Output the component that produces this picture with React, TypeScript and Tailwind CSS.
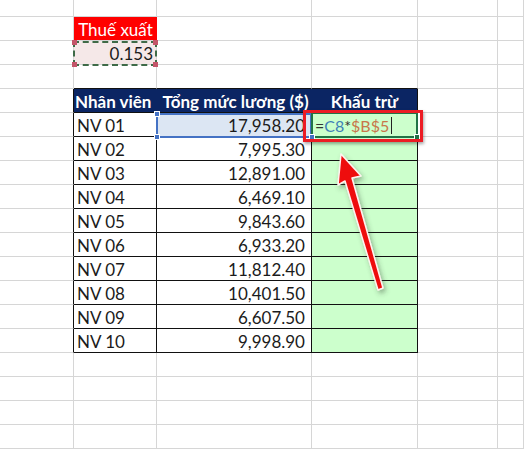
import React from "react";

const data: [string, string][] = [
  ["NV 01", "17,958.20"],
  ["NV 02", "7,995.30"],
  ["NV 03", "12,891.00"],
  ["NV 04", "6,469.10"],
  ["NV 05", "9,843.60"],
  ["NV 06", "6,933.20"],
  ["NV 07", "11,812.40"],
  ["NV 08", "10,401.50"],
  ["NV 09", "6,607.50"],
  ["NV 10", "9,998.90"],
];

const ROWS = 20;
const COLS = 6;

function rightCls(r: number, c: number) {
  if (r === 4 && (c === 1 || c === 2)) return "border-r-[#0b2563]";
  if (r >= 4 && r <= 14 && c >= 0 && c <= 3) return "border-r-[#111]";
  if (r === 1 && c === 1) return "border-r-[#ff0000]";
  return "border-r-[#d6d6d6]";
}

function bottomCls(r: number, c: number) {
  if (c >= 1 && c <= 3 && r >= 3 && r <= 14) return "border-b-[#111]";
  return "border-b-[#d6d6d6]";
}

function bgCls(r: number, c: number) {
  if (r === 1 && c === 1) return "bg-[#ff0000]";
  if (r === 2 && c === 1) return "bg-[#f5e8e8]";
  if (r === 4 && c >= 1 && c <= 3) return "bg-[#0b2563]";
  if (r === 5 && c === 2) return "bg-[#dce6f3]";
  if (r >= 5 && r <= 14 && c === 3) return "bg-[#ccffcc]";
  return "bg-white";
}

function content(r: number, c: number): React.ReactNode {
  if (r === 1 && c === 1)
    return <div className="w-full pl-[1px] text-center text-white">Thuế xuất</div>;
  if (r === 2 && c === 1)
    return <div className="w-full pr-[3px] text-right">0.153</div>;
  if (r === 4 && c === 1)
    return (
      <div className="relative z-10 whitespace-nowrap pl-[1px] font-bold text-white">
        Nhân viên
      </div>
    );
  if (r === 4 && c === 2)
    return (
      <div className="w-full whitespace-nowrap pl-[3px] text-center font-bold text-white">
        Tổng mức lương ($)
      </div>
    );
  if (r === 4 && c === 3)
    return <div className="w-full text-center font-bold text-white">Khấu trừ</div>;
  if (r >= 5 && r <= 14) {
    const d = data[r - 5];
    if (c === 1) return <div className="pl-[3px]">{d[0]}</div>;
    if (c === 2) return <div className="w-full pr-[6px] text-right">{d[1]}</div>;
    if (c === 3 && r === 5)
      return (
        <div className="relative z-10 flex items-end whitespace-nowrap pl-[3px] text-[16px]">
          <span className="text-[#333]">=</span>
          <span className="text-[#3f7fb8]">C8</span>
          <span className="text-[#333]">*</span>
          <span className="text-[#c8774a]">$B$5</span>
          <span className="mb-[2px] ml-[2px] inline-block h-[17px] w-px bg-[#222]" />
        </div>
      );
  }
  return null;
}

export default function App() {
  const cells: React.ReactNode[] = [];
  for (let r = 0; r < ROWS; r++) {
    for (let c = 0; c < COLS; c++) {
      cells.push(
        <div
          key={`${r}-${c}`}
          className={`flex items-end overflow-visible border-r border-b ${rightCls(r, c)} ${bottomCls(
            r,
            c
          )} ${bgCls(r, c)}`}
        >
          {content(r, c)}
        </div>
      );
    }
  }

  return (
    <div className="relative h-[449px] w-[524px] overflow-hidden bg-white font-['Lato','Open_Sans',sans-serif] text-[17px] leading-[20px] text-[#1b1b1b]">
      <div className="-mt-[7px] grid auto-rows-[24px] grid-cols-[74px_83px_155px_106px_80px_1fr]">
        {cells}
      </div>

      {/* copy marquee around 0.153 */}
      <div className="absolute left-[73px] top-[41px] h-[25px] w-[84px] border-2 border-dashed border-[#3f6b48]">
        <div className="absolute -left-[3px] -top-[3px] h-[5px] w-[5px] bg-[#c4556a]" />
        <div className="absolute -right-[3px] -top-[3px] h-[5px] w-[5px] bg-[#c4556a]" />
        <div className="absolute -bottom-[3px] -left-[3px] h-[5px] w-[5px] bg-[#c4556a]" />
        <div className="absolute -bottom-[3px] -right-[3px] h-[5px] w-[5px] bg-[#c4556a]" />
      </div>

      {/* blue reference selection C8 */}
      <div className="absolute left-[156px] top-[113px] h-[25px] w-[156px] border-2 border-[#4472c4]">
        <div className="absolute -left-[4px] -top-[4px] h-[6px] w-[6px] border border-white bg-[#4472c4]" />
        <div className="absolute -bottom-[4px] -left-[4px] h-[6px] w-[6px] border border-white bg-[#4472c4]" />
      </div>

      {/* active cell D8 */}
      <div className="absolute left-[311px] top-[112px] h-[26px] w-[107px] border-2 border-[#217346]">
        <div className="absolute -bottom-[4px] -left-[4px] h-[6px] w-[6px] border border-white bg-[#4472c4]" />
        <div className="absolute -bottom-[4px] -right-[4px] h-[6px] w-[6px] border border-white bg-[#217346]" />
      </div>

      {/* red annotation box */}
      <div className="absolute left-[303px] top-[110px] h-[32px] w-[120px] border-[3px] border-[#ec1c24] shadow-[1px_2px_3px_rgba(0,0,0,0.35)]" />

      {/* red arrow */}
      <svg className="absolute left-0 top-0" width="524" height="449" viewBox="0 0 524 449">
        <defs>
          <filter id="sh" x="-50%" y="-50%" width="200%" height="200%">
            <feDropShadow dx="2" dy="3" stdDeviation="2.5" floodColor="#3b4d3b" floodOpacity="0.45" />
          </filter>
        </defs>
        <polygon
          points="341,154 361,176 352,178 383,288 378,290 345,181 338,185"
          fill="#ee1111"
          stroke="#fff3f0"
          strokeWidth="1.5"
          strokeLinejoin="round"
          filter="url(#sh)"
        />
      </svg>
    </div>
  );
}
